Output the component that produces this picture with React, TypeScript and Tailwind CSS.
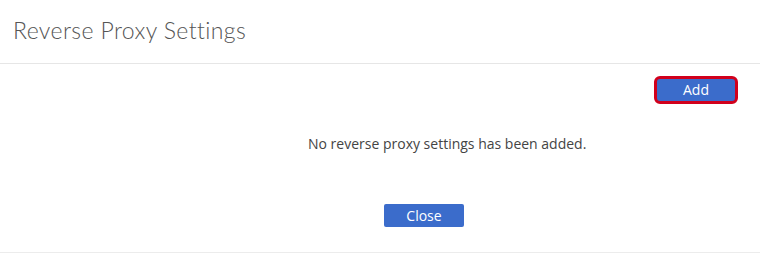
export default function App() {
  return (
    <div className="w-[760px] h-[254px] bg-white flex flex-col" style={{ fontFamily: '"Open Sans", sans-serif' }}>
      <div className="h-[64px] border-b border-[#e6e6e6] flex items-center pl-[13px] pb-[2px]">
        <h1 className="text-[23px] font-light text-[#555555] tracking-[0.4px]" style={{ fontFamily: 'Lato, sans-serif' }}>
          Reverse Proxy Settings
        </h1>
      </div>
      <div className="flex justify-end pr-[22px] pt-[12px]">
        <button className="w-[84px] h-[28px] rounded-[6px] border-[3px] border-[#d1001c] bg-[#3b6ccb] text-white text-[14px] leading-none">
          Add
        </button>
      </div>
      <p className="pl-[308px] mt-[30px] text-[14px] text-[#444444] leading-[19px]">
        No reverse proxy settings has been added.
      </p>
      <div className="flex pl-[384px] mt-[51px]">
        <button className="w-[80px] h-[23px] rounded-[2px] bg-[#3b6ccb] text-white text-[14px] leading-none">
          Close
        </button>
      </div>
      <div className="mt-auto border-b border-[#ececec] mb-[1px]" />
    </div>
  );
}
